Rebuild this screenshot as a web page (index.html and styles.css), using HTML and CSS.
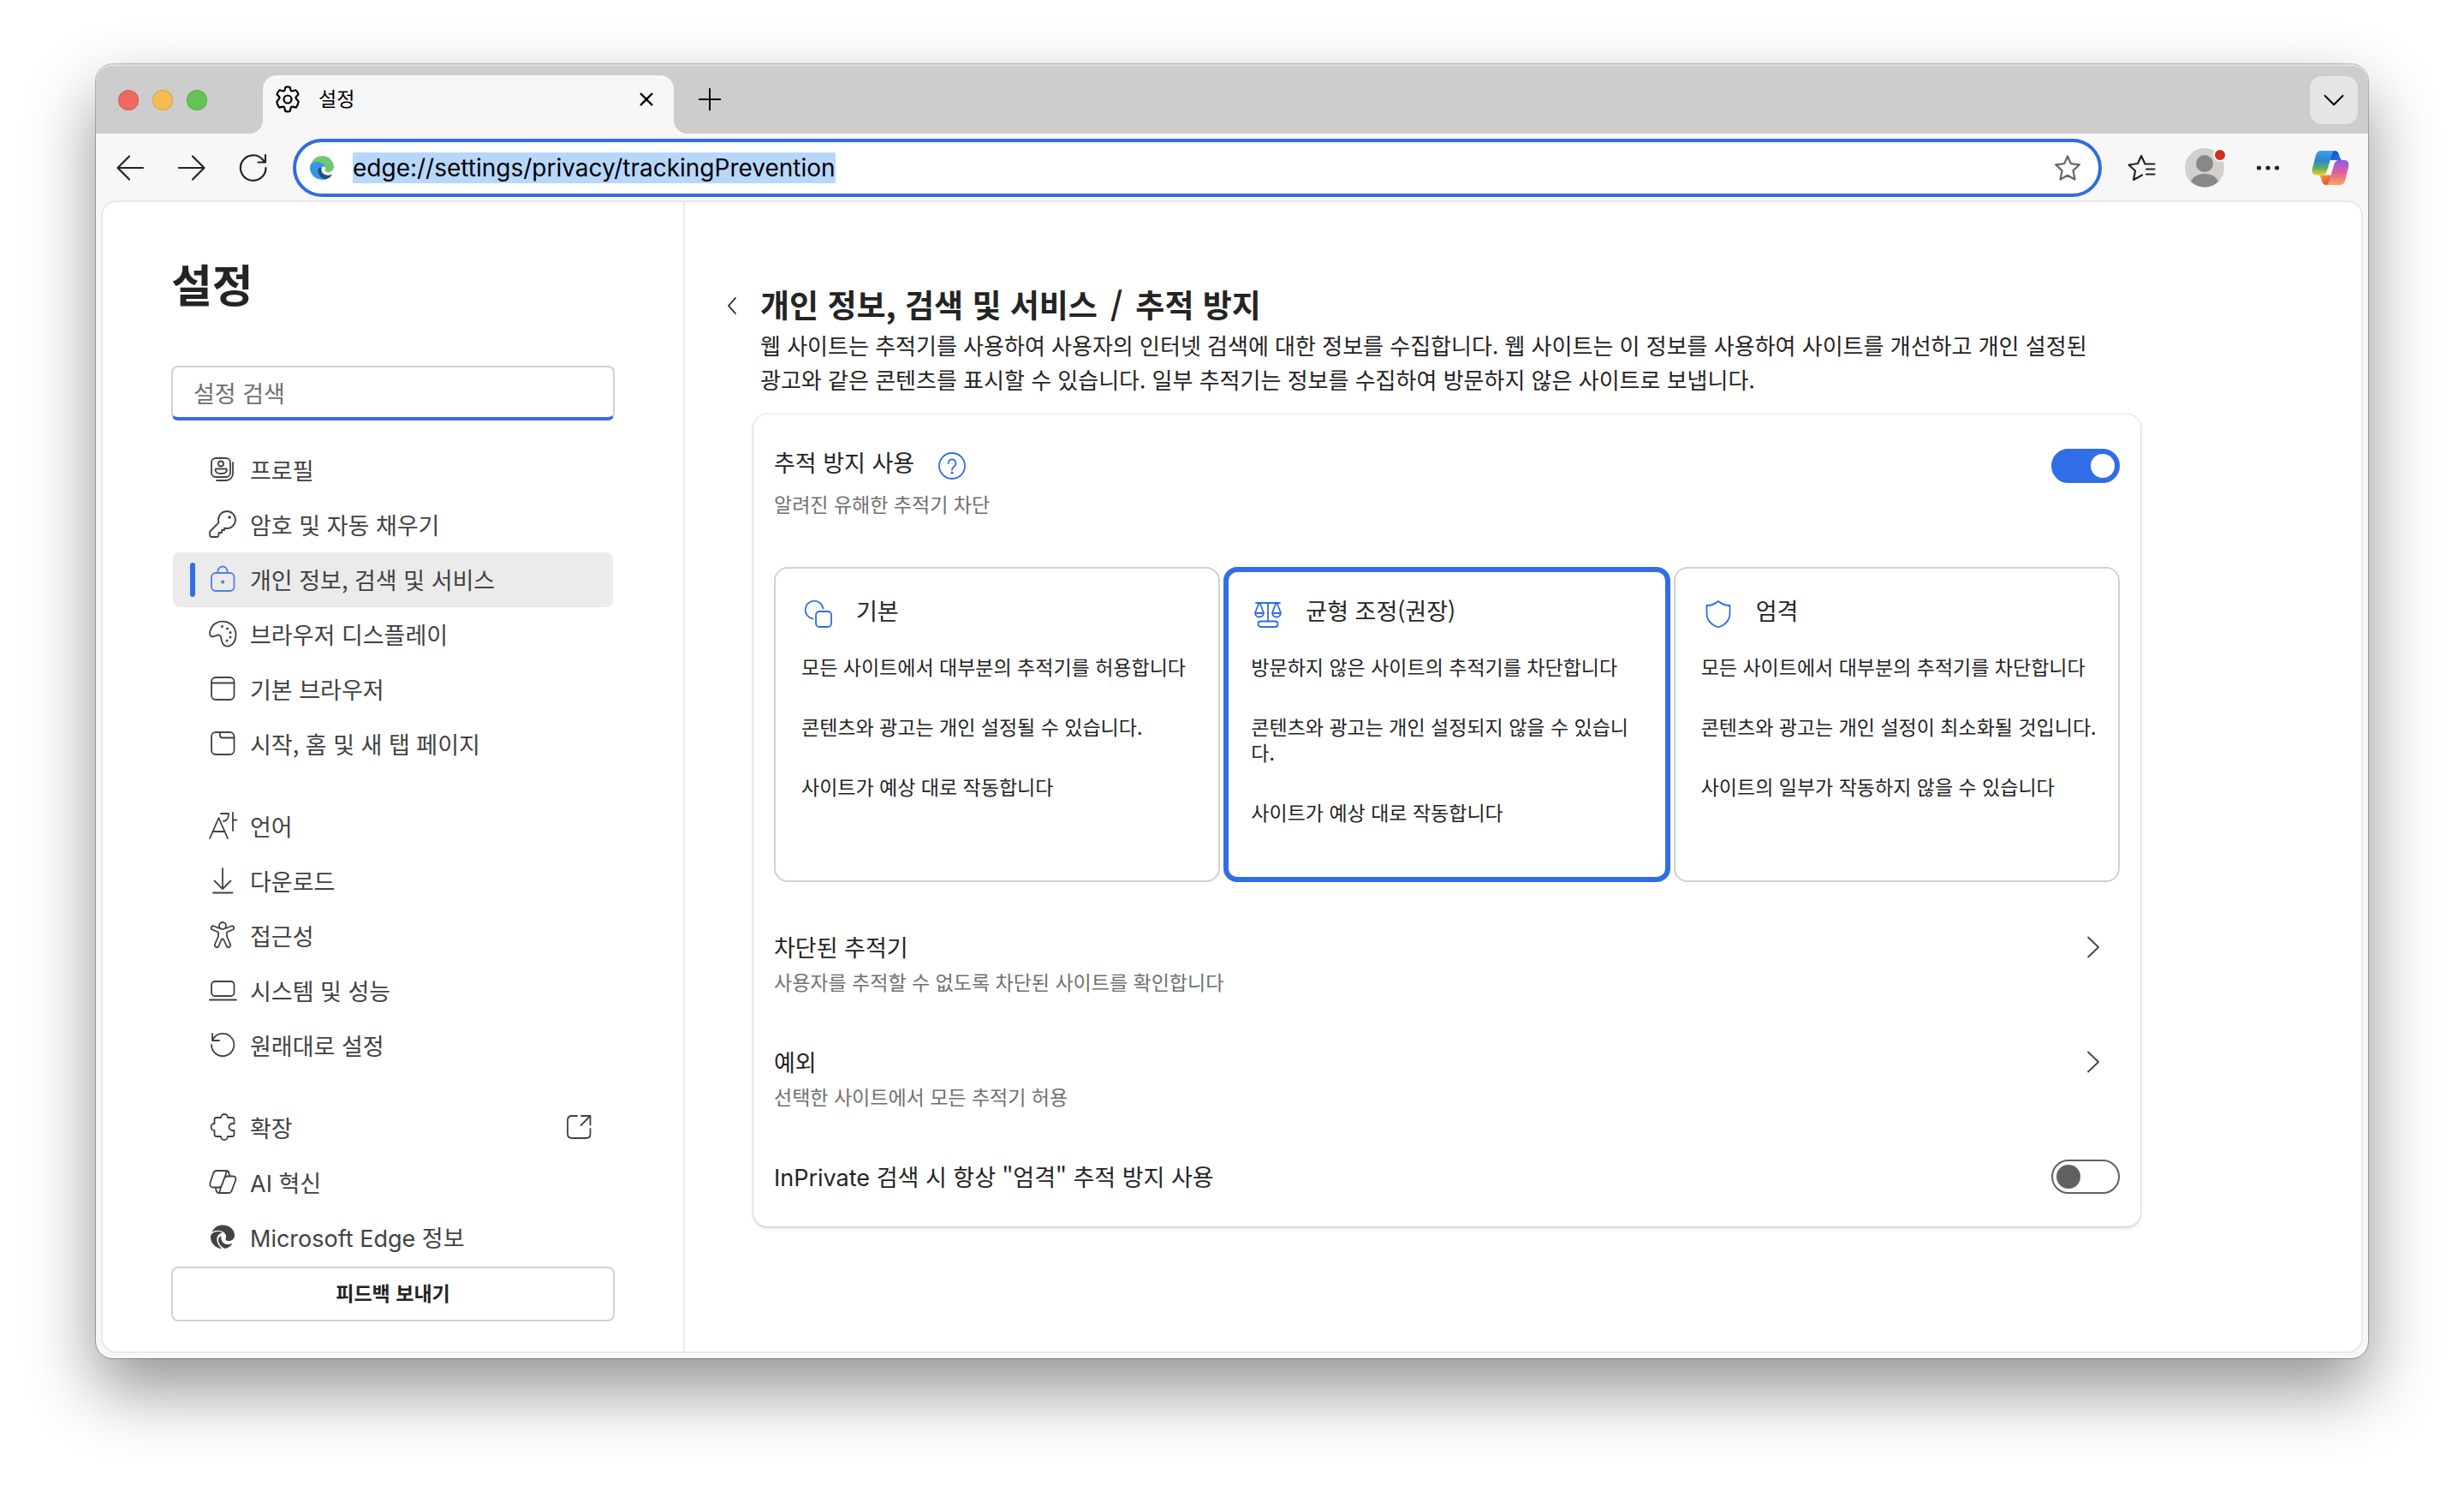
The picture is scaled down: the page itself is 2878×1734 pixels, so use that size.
FILE: index.html
```html
<!DOCTYPE html>
<html lang="ko">
  <head>
    <meta charset="UTF-8" />
    <meta name="viewport" content="width=device-width, initial-scale=1.0" />
    <title>설정</title>
    <link rel="stylesheet" href="styles.css">
  </head>
  <body>
    <div class="window">
      <div class="tabstrip">
        <div class="lights">
          <span class="light red"></span>
          <span class="light yellow"></span>
          <span class="light green"></span>
        </div>
        <div class="tab">
          <svg class="icon" viewBox="0 0 32 32"><path d="M13.4 1.8Q16 1 18.600 1.800L19.500 5.300Q20 6.600 21.500 6.300L25.500 5.200Q27.800 7.300 28.500 10.200L25.900 12.900Q24.800 14 25.900 15.300L28.700 18.600Q28 22.600 25.800 25.600L22 24.600Q20.100 24.200 19.600 26L18.700 29.900Q16 30.700 13.300 29.900L12.400 26Q11.900 24.200 10 24.600L6.200 25.600Q4 22.600 3.300 18.600L6.100 15.300Q7.200 14 6.100 12.900L3.500 10.200Q4.200 7.300 6.500 5.200L10.500 6.300Q12 6.600 12.500 5.300Z"/><circle cx="16" cy="16" r="4.500"/></svg>
          <span class="tab-title">설정</span>
          <button class="plain" aria-label="탭 닫기"><svg class="icon small" viewBox="0 0 20 20"><path d="M2 2l16 16M18 2L2 18"/></svg></button>
        </div>
        <button class="plain new-tab" aria-label="새 탭"><svg class="icon" viewBox="0 0 32 32"><path d="M16 2v28M2 16h28"/></svg></button>
        <button class="plain tab-menu" aria-label="탭 검색"><svg class="icon" viewBox="0 0 32 32"><path d="M4 10l12 12 12-12"/></svg></button>
      </div>

      <div class="toolbar">
        <div class="history">
          <button class="plain" aria-label="뒤로"><svg class="icon" viewBox="0 0 32 32"><path d="M31 16H1.500M15 2.500L1.500 16 15 29.500"/></svg></button>
          <button class="plain" aria-label="앞으로"><svg class="icon" viewBox="0 0 32 32"><path d="M1 16h29.500M17 2.500L30.500 16 17 29.500"/></svg></button>
          <button class="plain" aria-label="새로 고침"><svg class="icon" viewBox="0 0 32 32"><path d="M30.500 16A14.800 14.800 0 1 1 27 6.500L29 9M30 1v8.500h-8.500"/></svg></button>
        </div>
        <div class="address">
          <svg class="edge-logo" viewBox="2 2 28 28">
            <path fill="#6ccb6f" d="M3.500 11C6 5 11 2 16.500 2 24 2 30 8 30 14.500c0 4-3 6.500-6.500 6.500-3 0-4.500-1.500-3.900-3 1-1.600.7-4.500-1.600-6.500C14 8 7.500 8 3.500 11z"/>
            <path fill="#3796dc" d="M3.500 11C7.500 8 14 8 18 11.500c1.500 1.300 2.200 2.800 2.200 4-1.200-1.500-4.700-1.200-4.600.5C14.500 20 16 25 20.500 29.600 10 31.500 2 24.500 2 16c0-2 .6-3.500 1.500-5z"/>
            <path fill="#1f4f82" d="M15.600 15.500c-1.100 4 .9 7.500 4.900 8.800 2.500.7 5.500.2 7.500-.8-1 2.500-3.500 4.700-7 5.700-5.500.3-9.500-4.700-9.500-10.200 0-2 1.500-3.500 4.100-3.500z"/>
          </svg>
          <input class="url" type="text" aria-label="주소" value="edge://settings/privacy/trackingPrevention" />
          <button class="plain star" aria-label="즐겨찾기에 추가"><svg class="icon" viewBox="0 0 32 32"><path d="M16 2.500l3.900 8.600 10 1.200-7.400 6.800 2 10.400L16 24.800l-8.500 4.700 2-10.400-7.400-6.800 10-1.200z"/></svg></button>
        </div>
        <div class="actions">
          <button class="plain" aria-label="즐겨찾기"><svg class="icon" viewBox="0 0 32 32"><path d="M31.500 11.500H20.500L16 2l-4 9-10.500 1.500 7.500 7-2 10.500 10-5.500M22 17.500h9.500M22 23.500h9.500"/></svg></button>
          <button class="plain profile" aria-label="프로필">
            <svg viewBox="0 0 46 46"><circle cx="23" cy="23" r="23" fill="#d2d0ce"/><circle cx="23" cy="18" r="10" fill="#8a8886"/><path fill="#8a8886" d="M7 39C10 32.500 16 30 23 30s13 2.500 16 9A23 23 0 0 1 7 39z"/></svg>
            <span class="dot"></span>
          </button>
          <button class="plain" aria-label="설정 및 기타"><svg class="icon filled" viewBox="0 0 32 32"><circle cx="5.500" cy="16" r="2.600"/><circle cx="16" cy="16" r="2.600"/><circle cx="26.500" cy="16" r="2.600"/></svg></button>
          <button class="plain copilot" aria-label="Copilot">
            <svg viewBox="0 0 44 40">
              <defs>
                <linearGradient id="left" x1="0" y1="0" x2="0" y2="1"><stop offset="0" stop-color="#39a5ea"/><stop offset=".4" stop-color="#2f84d0"/><stop offset=".72" stop-color="#5fae62"/><stop offset="1" stop-color="#efd21d"/></linearGradient>
                <linearGradient id="right" x1="0" y1="0" x2="0" y2="1"><stop offset="0" stop-color="#8f5bea"/><stop offset=".5" stop-color="#e0609c"/><stop offset="1" stop-color="#fba45a"/></linearGradient>
                <linearGradient id="top" x1="0" y1="0" x2="1" y2="1"><stop offset="0" stop-color="#0d49b5"/><stop offset="1" stop-color="#2b7bea"/></linearGradient>
                <linearGradient id="bottom" x1="0" y1="0" x2="1" y2="1"><stop offset="0" stop-color="#f8a13e"/><stop offset="1" stop-color="#d8452c"/></linearGradient>
              </defs>
              <path fill="url(#top)" d="M20 0h7c2.500 0 4 1.500 4.800 4l1.200 3.500c.8 2.500 1.800 3.500 4 3.500H22z"/>
              <path fill="url(#bottom)" d="M24 40h-7c-2.500 0-4-1.500-4.800-4L11 32c-.8-2.500-1.800-3.500-4-3.500h15z"/>
              <path fill="url(#left)" d="M11 0h17c-2.500 0-3.500 2-4.500 5l-5.500 18c-1 3.500-2.500 5.500-5.500 5.500H6C1.500 28.500 0 25 .800 21L5 5C6 1.500 8 0 11 0z"/>
              <path fill="url(#right)" d="M33 40H16c2.500 0 3.500-2 4.500-5L26 17c1-3.500 2.500-6 5.500-6H38c4.500 0 6 3.500 5.200 7.500L39 35c-1 3.500-3 5-6 5z"/>
              <path fill="#fff" d="M25 12h3.500c-1.500 1-2.300 2.800-3 5l-2 7.500c-.7 2.300-1.700 3.500-3.500 3.500h-3.500c1.500-1 2.300-2.500 3-5l2-7.500c.7-2.300 1.700-3.500 3.500-3.500z"/>
            </svg>
          </button>
        </div>
      </div>

      <div class="page">
        <aside class="sidebar">
          <h2>설정</h2>
          <input class="search" type="search" aria-label="설정 검색" placeholder="설정 검색" />
          <nav>
            <a href="#"><svg class="icon" viewBox="0 0 32 32"><rect x="3" y="3" width="22" height="22" rx="5"/><path d="M28 8v13a8 8 0 0 1-8 8H9"/><circle cx="14" cy="9.500" r="3"/><path d="M8.500 15.500h11.500a1 1 0 0 1 1 1c0 3-3 4.500-6.500 4.500S7.500 19.500 7.500 16.500a1 1 0 0 1 1-1z"/></svg>프로필</a>
            <a href="#"><svg class="icon" viewBox="0 0 32 32"><path d="M21 1a10 10 0 0 1 0 20q-1.500 0-3-.5V23h-3v3h-3.500v2.500q0 2.500-2.500 2.500H3.500Q1 31 1 28.500v-2.700q0-1 .8-1.800L11.500 14.200Q11 12.500 11 11A10 10 0 0 1 21 1z"/><circle class="dotfill" cx="24" cy="8" r="1.800"/></svg>암호 및 자동 채우기</a>
            <a href="#" class="active"><svg class="icon" viewBox="0 0 32 32"><rect x="3" y="9" width="26.500" height="21" rx="5"/><path d="M10.500 9V7a5.500 5.500 0 0 1 11 0v2"/><circle class="dotfill" cx="16.200" cy="19.500" r="2"/></svg>개인 정보, 검색 및 서비스</a>
            <a href="#"><svg class="icon" viewBox="0 0 32 32"><path d="M2 18.500C0 16 1.500 9.500 5.500 5.500 11 .5 20 .5 26 5c6 5 7 14 3.500 20.500-2.500 4.500-8 6.500-11.500 4-3-2-3-5.500-4-9.500-.5-2.500-3-3-5.500-2-2.500 1.200-4.500 2.500-6.500.5z"/><circle class="dotfill" cx="15.500" cy="7.500" r="1.500"/><circle class="dotfill" cx="21.500" cy="10" r="1.500"/><circle class="dotfill" cx="25" cy="14.500" r="1.500"/><circle class="dotfill" cx="25" cy="20" r="1.500"/><circle class="dotfill" cx="21" cy="24" r="1.500"/></svg>브라우저 디스플레이</a>
            <a href="#"><svg class="icon" viewBox="0 0 32 32"><rect x="3" y="3" width="26.500" height="26" rx="5"/><path d="M3 9.500h26.500"/></svg>기본 브라우저</a>
            <a href="#"><svg class="icon" viewBox="0 0 32 32"><rect x="3" y="3" width="26.500" height="26" rx="5"/><path d="M13 3v3.500q0 3 3 3h13.500"/></svg>시작, 홈 및 새 탭 페이지</a>
          </nav>
          <nav>
            <a href="#"><svg class="icon" viewBox="0 0 32 32"><path d="M1 31L11.500 7 22 31M4.500 23h14M14 2h9c0 6-2 8.500-6 9M28 1v21M28 9.500h4.500"/></svg>언어</a>
            <a href="#"><svg class="icon" viewBox="0 0 32 32"><path d="M16 2v24M6.500 16.500L16 26l9.500-9.500M5 30.500h22.500"/></svg>다운로드</a>
            <a href="#"><svg class="icon" viewBox="0 0 32 32"><circle cx="16" cy="5" r="4"/><path d="M12.500 8L6 5.500C3 4.500 1.500 8 4 9.500L11 12.500v5L7 26.500c-1 3.500 3 5 4.500 2l3-7q1.500-2 3 0l3 7c1.500 3 5.500 1.500 4.500-2L21 17.500v-5L28 9.500C30.500 8 29 4.500 26 5.500L19.500 8"/></svg>접근성</a>
            <a href="#"><svg class="icon" viewBox="0 0 32 32"><rect x="3" y="6" width="26.500" height="17" rx="4"/><path d="M1 27.500h31"/></svg>시스템 및 성능</a>
            <a href="#"><svg class="icon" viewBox="0 0 32 32"><path d="M3 16A13.200 13.200 0 1 0 5 9L4 10.500M4 3v8h8"/></svg>원래대로 설정</a>
          </nav>
          <nav>
            <a href="#"><svg class="icon" viewBox="0 0 32 32"><path d="M9 5h5a4 4 0 0 1 8 0h5q2.500 0 2.500 2.500V12h-2a4 4 0 0 0 0 8h2v4.500q0 2.500-2.500 2.500h-5a4 4 0 0 1-8 0H9q-2.500 0-2.500-2.500V20a4 4 0 0 1 0-8V7.500Q6.500 5 9 5z"/></svg>확장<svg class="icon external" viewBox="0 0 32 32"><path d="M14 3H8Q3 3 3 8v16q0 5 5 5h16.500q5 0 5-5v-6M19 3h10.500v10.500M29.500 3L18.500 14"/></svg></a>
            <a href="#"><svg class="icon" viewBox="0 0 32 32"><path d="M9.500 3H20q3 0 3.500 3l1 3.500M9.500 3Q6 3 5 6.500L1.500 17Q.5 22.500 5 22.500h6.500q3 0 4-3.500L20 6.500Q21 3 19 3M22.500 29H12q-3 0-3.500-3L8 22.500M22.500 29q3.500 0 4.500-3.500l4-11Q32.500 9.500 28 9.500h-6.500q-3 0-4 3.500L13 25.500Q12 29 13 29"/></svg><span><span class="latin">AI</span> 혁신</span></a>
            <a href="#"><svg class="icon filled" viewBox="0 0 32 32"><path d="M3.500 11C6 5 11 2.500 16.500 2.500 24 2.500 30 8 30 14.500c0 4-3 6.500-6.500 6.500-3 0-4.500-1.500-3.900-3 1-1.600.7-4.500-1.600-6.500C14 8 7.500 8 3.500 11z"/><path d="M3 13c3.500-3.500 10-4 13-1.500-5 1-7.500 4.500-6.500 9.500.8 4 3 7 6 9C8.500 30 2 24 2 16.500 2 15 2.500 14 3 13z"/><path d="M14.500 15.500c-1 5 2 9 6.500 9.500 2.500.3 4.500-.2 6.500-1.300-2 3.500-5.500 6-9 6-4.500-1.700-7.500-6-7.500-10 0-2 1.500-3.700 3.500-4.200z"/></svg><span><span class="latin">Microsoft Edge</span> 정보</span></a>
          </nav>
          <button class="feedback">피드백 보내기</button>
        </aside>

        <main>
          <header>
            <button class="plain back" aria-label="뒤로"><svg class="icon" viewBox="0 0 32 32"><path d="M19 9l-8 9 8 9"/></svg></button>
            <h1><span>개인 정보, 검색 및 서비스</span><span>/</span><span>추적 방지</span></h1>
          </header>
          <p class="intro">웹 사이트는 추적기를 사용하여 사용자의 인터넷 검색에 대한 정보를 수집합니다. 웹 사이트는 이 정보를 사용하여 사이트를 개선하고 개인 설정된 광고와 같은 콘텐츠를 표시할 수 있습니다. 일부 추적기는 정보를 수집하여 방문하지 않은 사이트로 보냅니다.</p>

          <section class="panel">
            <div class="row main-row">
              <div>
                <div class="row-title"><label for="tracking">추적 방지 사용</label><button class="plain help" aria-label="도움말"><svg class="icon" viewBox="0 0 32 32"><circle cx="16" cy="16" r="15"/><path d="M11.500 13a4.500 4.500 0 1 1 7.500 3.300c-1.800 1.500-3 2.200-3 4.200"/><circle class="dotfill" cx="16" cy="24" r="1.500"/></svg></button></div>
                <div class="sub">알려진 유해한 추적기 차단</div>
              </div>
              <input class="toggle" type="checkbox" id="tracking" checked />
            </div>

            <div class="levels">
              <label class="level">
                <input type="radio" name="level" />
                <span class="level-head"><svg class="icon" viewBox="0 0 32 32"><rect x="13" y="13" width="18" height="18" rx="4"/><path d="M9.500 21.500A10.500 10.500 0 1 1 21.500 9.500"/></svg><span>기본</span></span>
                <span>모든 사이트에서 대부분의 추적기를 허용합니다</span>
                <span>콘텐츠와 광고는 개인 설정될 수 있습니다.</span>
                <span>사이트가 예상 대로 작동합니다</span>
              </label>
              <label class="level">
                <input type="radio" name="level" checked />
                <span class="level-head"><svg class="icon" viewBox="0 0 32 32"><path d="M2 3h28M16 3v21M5.500 3L1 14.500a5 5 0 0 0 10 0L6.500 3M25.500 3L21 14.500a5 5 0 0 0 10 0L26.500 3M1 15h10M21 15h10"/><rect x="4.500" y="24.500" width="23" height="6.500" rx="3"/></svg><span>균형 조정(권장)</span></span>
                <span>방문하지 않은 사이트의 추적기를 차단합니다</span>
                <span>콘텐츠와 광고는 개인 설정되지 않을 수 있습니다.</span>
                <span>사이트가 예상 대로 작동합니다</span>
              </label>
              <label class="level">
                <input type="radio" name="level" />
                <span class="level-head"><svg class="icon" viewBox="0 0 32 32"><path d="M16 1c4 3.500 8.500 5 13.500 5v9c0 8-5 13.500-13.500 16.500C7.500 28.500 2.500 23 2.500 15V6C7.500 6 12 4.500 16 1z"/></svg><span>엄격</span></span>
                <span>모든 사이트에서 대부분의 추적기를 차단합니다</span>
                <span>콘텐츠와 광고는 개인 설정이 최소화될 것입니다.</span>
                <span>사이트의 일부가 작동하지 않을 수 있습니다</span>
              </label>
            </div>

            <div class="links">
              <a class="row" href="#">
                <div>
                  <div class="row-title">차단된 추적기</div>
                  <div class="sub">사용자를 추적할 수 없도록 차단된 사이트를 확인합니다</div>
                </div>
                <svg class="icon chevron" viewBox="0 0 32 32"><path d="M11 4.500l12 11.500-12 11.500"/></svg>
              </a>
              <a class="row" href="#">
                <div>
                  <div class="row-title">예외</div>
                  <div class="sub">선택한 사이트에서 모든 추적기 허용</div>
                </div>
                <svg class="icon chevron" viewBox="0 0 32 32"><path d="M11 4.500l12 11.500-12 11.500"/></svg>
              </a>
              <div class="row">
                <label class="row-title" for="inprivate"><span><span class="latin">InPrivate</span> 검색 시 항상 "엄격" 추적 방지 사용</span></label>
                <input class="toggle" type="checkbox" id="inprivate" />
              </div>
            </div>
          </section>
        </main>
      </div>
    </div>
  </body>
</html>
```
FILE: styles.css
```css
* {
  box-sizing: border-box;
}

body {
  font-family: "Noto Sans CJK KR", sans-serif;
  font-size: 27px;
  color: #242424;
  background: #fff;
  margin: 0;
  padding: 75px 112px 148px;
  min-height: 100vh;
  display: flex;
}

h1,
h2,
p {
  margin: 0;
}

a {
  color: inherit;
  text-decoration: none;
}

input,
button {
  font: inherit;
  color: inherit;
}

.plain {
  display: flex;
  align-items: center;
  justify-content: center;
  flex-shrink: 0;
  padding: 0;
  border: none;
  background: none;
  cursor: pointer;
}

.latin {
  font-family: Inter, sans-serif;
}

.icon {
  width: 32px;
  height: 32px;
  flex-shrink: 0;
  display: block;
  overflow: visible;
  fill: none;
  stroke: currentColor;
  stroke-width: 1.8;
  stroke-linecap: round;
  stroke-linejoin: round;
}

.icon.small {
  width: 16px;
  height: 16px;
  stroke-width: 2.5;
}

.icon.filled,
.dotfill {
  fill: currentColor;
  stroke: none;
}

.window {
  flex: 1;
  min-width: 0;
  display: flex;
  flex-direction: column;
  background: #f7f7f7;
  border-radius: 20px;
  box-shadow: 0 0 0 1px rgba(0, 0, 0, 0.25), 0 36px 80px rgba(0, 0, 0, 0.43);
}

/* tabs */
.tabstrip {
  display: flex;
  align-items: center;
  height: 81px;
  padding: 0 12px 0 26px;
  background: #cdcdcd;
  border-radius: 20px 20px 0 0;
  border-top: 2px solid #e0e0e0;
}

.tabstrip .icon,
.toolbar .icon {
  stroke-width: 2.2;
}

.tabstrip .icon.small {
  stroke-width: 2.8;
}

.lights {
  display: flex;
  gap: 16px;
  margin-right: 65px;
}

.light {
  width: 24px;
  height: 24px;
  border-radius: 50%;
  border: 1px solid rgba(0, 0, 0, 0.12);
}

.red {
  background: #ee6a5f;
}

.yellow {
  background: #f5bd4f;
}

.green {
  background: #61c454;
}

.tab {
  position: relative;
  align-self: flex-end;
  display: flex;
  align-items: center;
  width: 480px;
  height: 68px;
  padding: 0 24px 12px 13px;
  background: #f7f7f7;
  border-radius: 16px 16px 0 0;
  color: #000;
}

.tab::before,
.tab::after {
  content: "";
  position: absolute;
  bottom: 0;
  width: 16px;
  height: 16px;
}

.tab::before {
  left: -16px;
  background: radial-gradient(circle at 0 0, transparent 16px, #f7f7f7 16px);
}

.tab::after {
  right: -16px;
  background: radial-gradient(circle at 100% 0, transparent 16px, #f7f7f7 16px);
}

.tab-title {
  flex: 1;
  margin-left: 20px;
  padding-bottom: 4px;
  font-size: 23px;
  line-height: 32px;
}

.new-tab {
  margin-left: 28px;
  padding-bottom: 2px;
  color: #000;
}

.new-tab .icon {
  width: 28px;
  height: 28px;
}

.tab-menu {
  width: 56px;
  height: 56px;
  margin-left: auto;
  border-radius: 14px;
  background: #e6e6e6;
  color: #000;
}

.tab-menu .icon {
  width: 28px;
  height: 28px;
}

/* toolbar */
.toolbar {
  display: flex;
  align-items: center;
  gap: 30px;
  height: 80px;
  padding: 0 22px 0 24px;
}

.history {
  display: flex;
  gap: 40px;
}

.actions {
  display: flex;
  align-items: center;
  gap: 35px;
}

.address {
  flex: 1;
  min-width: 0;
  display: flex;
  align-items: center;
  height: 68px;
  padding: 0 20px 0 16px;
  border: 4px solid #316ddc;
  border-radius: 34px;
  background: #fff;
}

.edge-logo {
  width: 28px;
  height: 28px;
  flex-shrink: 0;
  margin-right: 22px;
}

.url {
  field-sizing: content;
  height: 36px;
  padding: 0;
  border: none;
  outline: none;
  background: #b8d7fc;
  color: #000;
  font-family: Inter, sans-serif;
  font-size: 28px;
}

.star {
  margin-left: auto;
  color: #666;
}

.profile {
  position: relative;
  width: 46px;
}

.profile svg {
  width: 46px;
  height: 46px;
}

.dot {
  position: absolute;
  top: 0;
  right: -3px;
  width: 16px;
  height: 16px;
  border: 2px solid #f7f7f7;
  border-radius: 50%;
  background: #d0301c;
}

.copilot svg {
  width: 44px;
  height: 40px;
}

/* page */
.page {
  flex: 1;
  display: flex;
  margin: 0 8px 8px;
  background: #fff;
  border-radius: 16px;
  box-shadow: 0 0 0 2px #e8e8e8;
}

.sidebar {
  width: 680px;
  flex-shrink: 0;
  padding: 63px 80px 34px;
  border-right: 2px solid #ebebeb;
}

.sidebar h2 {
  font-size: 52px;
  line-height: 64px;
}

.search {
  display: block;
  width: 100%;
  height: 64px;
  margin: 64px 0 26px;
  padding: 0 24px;
  border: 2px solid #d1d1d1;
  border-bottom: 4px solid #316ddc;
  border-radius: 8px;
  background: #fff;
  outline: none;
}

.search::placeholder {
  color: #707070;
}

nav {
  margin: 0 2px 32px;
}

nav:last-of-type {
  margin-bottom: 2px;
}

nav a {
  position: relative;
  display: flex;
  align-items: center;
  gap: 16px;
  height: 64px;
  padding: 0 24px 2px 42px;
  border-radius: 8px;
  color: #424242;
}

nav .active {
  background: #ebebeb;
}

nav .active .icon {
  color: #4a80e8;
}

nav .active::before {
  content: "";
  position: absolute;
  left: 20px;
  top: 12px;
  width: 6px;
  height: 40px;
  border-radius: 3px;
  background: #316de6;
}

.external {
  margin-left: auto;
}

.feedback {
  width: 100%;
  height: 64px;
  padding: 0 0 4px;
  border: 2px solid #d1d1d1;
  border-radius: 8px;
  background: #fff;
  font-size: 23px;
  font-weight: 700;
}

main {
  flex: 1;
  min-width: 0;
  max-width: 1700px;
  padding: 91px 0 0 40px;
}

header {
  display: flex;
  align-items: center;
  gap: 16px;
}

h1 {
  display: flex;
  gap: 15px;
  font-size: 37px;
  line-height: 56px;
}

.intro {
  margin: 0 48px;
  font-size: 26px;
  line-height: 40px;
}

.panel {
  margin: 21px 0 0 40px;
  padding: 36px 24px;
  border-radius: 16px;
  box-shadow: 0 0 3px rgba(0, 0, 0, 0.2), 0 2px 4px rgba(0, 0, 0, 0.15);
}

.row {
  display: flex;
  align-items: flex-start;
  justify-content: space-between;
}

.row-title {
  display: flex;
  align-items: center;
  line-height: 40px;
}

.sub {
  margin-top: 4px;
  font-size: 23px;
  line-height: 32px;
  color: #707070;
}

.main-row .sub {
  margin-top: 12px;
}

.main-row .toggle {
  margin-top: 4px;
}

.help {
  margin: 8px 0 0 28px;
  color: #316ddc;
}

.toggle {
  appearance: none;
  position: relative;
  width: 80px;
  height: 40px;
  margin: 0;
  border: 2px solid #616161;
  border-radius: 20px;
}

.toggle::before {
  content: "";
  position: absolute;
  top: 4px;
  left: 4px;
  width: 28px;
  height: 28px;
  border-radius: 50%;
  background: #616161;
}

.toggle:checked {
  border-color: #316de6;
  background: #316de6;
}

.toggle:checked::before {
  left: 44px;
  background: #fff;
}

.levels {
  display: grid;
  grid-template-columns: repeat(3, 1fr);
  gap: 4px;
  margin: 58px 0 56px;
}

.level {
  position: relative;
  display: flex;
  flex-direction: column;
  gap: 40px;
  padding: 29px 24px 65px 30px;
  border: 2px solid #d1d1d1;
  border-radius: 16px;
  font-size: 23px;
  line-height: 30px;
}

.level:has(:checked) {
  padding: 25px 20px 61px 26px;
  border: 6px solid #316de6;
}

.level input {
  position: absolute;
  opacity: 0;
}

.level-head {
  display: flex;
  align-items: center;
  gap: 28px;
  margin-bottom: -10px;
  padding-left: 4px;
  font-size: 27px;
  line-height: 40px;
}

.level-head .icon {
  margin-top: 8px;
  color: #316ddc;
}

.links {
  display: flex;
  flex-direction: column;
  gap: 58px;
}

.chevron {
  margin: 4px 16px 0 0;
  color: #424242;
}
```
